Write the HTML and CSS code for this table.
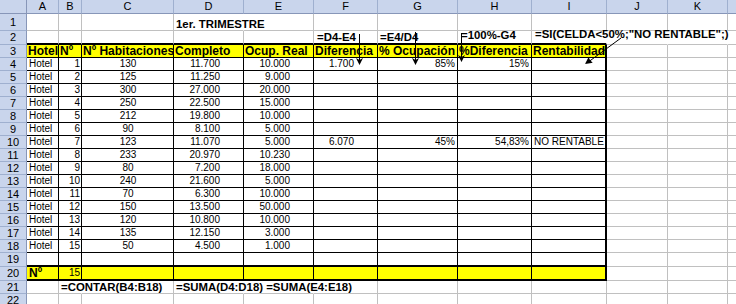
FILE: index.html
```html
<!DOCTYPE html>
<html lang="es">
<head>
<meta charset="utf-8">
<title>1er. TRIMESTRE</title>
<link rel="stylesheet" href="styles.css">
</head>
<body>
<div class="sheet">
  <div class="grid">
    <div class="hdr"><div class="corner"></div><div>A</div><div>B</div><div>C</div><div>D</div><div>E</div><div>F</div><div>G</div><div>H</div><div>I</div><div>J</div><div>K</div><div></div></div>

    <div class="row r1"><div class="rh">1</div><div></div><div></div><div></div><div class="ov f">1er. TRIMESTRE</div><div></div><div></div><div></div><div></div><div></div><div></div><div></div><div></div></div>

    <div class="row top"><div class="rh">2</div><div></div><div></div><div></div><div></div><div></div><div class="f pl3">=D4-E4</div><div class="f">=E4/D4</div><div class="f pl3 up2">=100%-G4</div><div class="ov f pl3 up3">=SI(CELDA&lt;50%;"NO RENTABLE";)</div><div class="nr"></div><div class="nr"></div><div></div></div>

    <div class="row t yl hrow"><div class="rh">3</div><div>Hotel</div><div>Nº</div><div>Nº Habitaciones</div><div>Completo</div><div>Ocup. Real</div><div>Diferencia</div><div>% Ocupación</div><div>%Diferencia</div><div>Rentabilidad</div><div></div><div></div><div></div></div>

    <div class="row t d"><div class="rh">4</div><div>Hotel</div><div>1</div><div>130</div><div>11.700</div><div>10.000</div><div>1.700</div><div>85%</div><div>15%</div><div></div><div></div><div></div><div></div></div>
    <div class="row t d"><div class="rh">5</div><div>Hotel</div><div>2</div><div>125</div><div>11.250</div><div>9.000</div><div></div><div></div><div></div><div></div><div></div><div></div><div></div></div>
    <div class="row t d"><div class="rh">6</div><div>Hotel</div><div>3</div><div>300</div><div>27.000</div><div>20.000</div><div></div><div></div><div></div><div></div><div></div><div></div><div></div></div>
    <div class="row t d"><div class="rh">7</div><div>Hotel</div><div>4</div><div>250</div><div>22.500</div><div>15.000</div><div></div><div></div><div></div><div></div><div></div><div></div><div></div></div>
    <div class="row t d"><div class="rh">8</div><div>Hotel</div><div>5</div><div>212</div><div>19.800</div><div>10.000</div><div></div><div></div><div></div><div></div><div></div><div></div><div></div></div>
    <div class="row t d"><div class="rh">9</div><div>Hotel</div><div>6</div><div>90</div><div>8.100</div><div>5.000</div><div></div><div></div><div></div><div></div><div></div><div></div><div></div></div>
    <div class="row t d"><div class="rh">10</div><div>Hotel</div><div>7</div><div>123</div><div>11.070</div><div>5.000</div><div>6.070</div><div>45%</div><div>54,83%</div><div>NO RENTABLE</div><div></div><div></div><div></div></div>
    <div class="row t d"><div class="rh">11</div><div>Hotel</div><div>8</div><div>233</div><div>20.970</div><div>10.230</div><div></div><div></div><div></div><div></div><div></div><div></div><div></div></div>
    <div class="row t d"><div class="rh">12</div><div>Hotel</div><div>9</div><div>80</div><div>7.200</div><div>18.000</div><div></div><div></div><div></div><div></div><div></div><div></div><div></div></div>
    <div class="row t d"><div class="rh">13</div><div>Hotel</div><div>10</div><div>240</div><div>21.600</div><div>5.000</div><div></div><div></div><div></div><div></div><div></div><div></div><div></div></div>
    <div class="row t d"><div class="rh">14</div><div>Hotel</div><div>11</div><div>70</div><div>6.300</div><div>10.000</div><div></div><div></div><div></div><div></div><div></div><div></div><div></div></div>
    <div class="row t d"><div class="rh">15</div><div>Hotel</div><div>12</div><div>150</div><div>13.500</div><div>50.000</div><div></div><div></div><div></div><div></div><div></div><div></div><div></div></div>
    <div class="row t d"><div class="rh">16</div><div>Hotel</div><div>13</div><div>120</div><div>10.800</div><div>10.000</div><div></div><div></div><div></div><div></div><div></div><div></div><div></div></div>
    <div class="row t d"><div class="rh">17</div><div>Hotel</div><div>14</div><div>135</div><div>12.150</div><div>3.000</div><div></div><div></div><div></div><div></div><div></div><div></div><div></div></div>
    <div class="row t d"><div class="rh">18</div><div>Hotel</div><div>15</div><div>50</div><div>4.500</div><div>1.000</div><div></div><div></div><div></div><div></div><div></div><div></div><div></div></div>

    <div class="row t tk"><div class="rh">19</div><div></div><div></div><div></div><div></div><div></div><div></div><div></div><div></div><div></div><div></div><div></div><div></div></div>
    <div class="row t tk yl d"><div class="rh">20</div><div class="b">Nº</div><div>15</div><div></div><div></div><div></div><div></div><div></div><div></div><div></div><div></div><div></div><div></div></div>

    <div class="row"><div class="rh">21</div><div></div><div class="ov f">=CONTAR(B4:B18)</div><div></div><div class="ov f">=SUMA(D4:D18) =SUMA(E4:E18)</div><div class="nr"></div><div></div><div></div><div></div><div></div><div></div><div></div><div></div></div>
    <div class="row"><div class="rh">22</div><div></div><div></div><div></div><div></div><div></div><div></div><div></div><div></div><div></div><div></div><div></div><div></div></div>
  </div>

  <svg class="arrows" width="736" height="304" viewBox="0 0 736 304">
    <g stroke="#000" stroke-width="1" fill="none">
      <line x1="359.5" y1="34" x2="359.5" y2="60"/>
      <line x1="415.5" y1="32" x2="415.5" y2="60"/>
      <line x1="461.5" y1="33" x2="461.5" y2="57"/>
      <line x1="621" y1="38" x2="589" y2="61.5"/>
    </g>
    <g fill="#000">
      <polygon points="356,58 359.5,60 363,58 359.5,65"/>
      <polygon points="412,58 415.5,60 419,58 415.5,65"/>
      <polygon points="458,55 461.5,57 465,55 461.5,62"/>
      <polygon points="585,64 592.7,62.7 590,60 588.6,57.1"/>
    </g>
  </svg>
</div>
</body>
</html>
```

FILE: styles.css
```css
* { box-sizing: border-box; }

html, body {
  margin: 0;
  padding: 0;
  background: #fff;
  overflow: hidden;
}

body {
  font-family: "Liberation Sans", Arial, sans-serif;
  font-size: 10px;
  color: #000;
}

.sheet {
  position: relative;
  width: 736px;
  height: 304px;
  overflow: hidden;
}

.grid {
  display: grid;
  grid-template-columns: 27px 32px 23px 92px 70px 70px 64px 80px 74px 75px 61px 60px 60px;
  grid-template-rows: 14px 17px 14px 13px repeat(15, 13px) 14px 14px 13px 13px;
  width: 788px;
}

.row, .hdr { display: contents; }

/* column header strip */
.hdr > div {
  background: #c9d5ec;
  border-right: 1px solid #9fb0cf;
  border-bottom: 1px solid #8796b8;
  text-align: center;
  font-size: 11px;
  line-height: 13px;
}
.hdr > .corner { border-right-color: #8796b8; }

/* base cell */
.grid .row > div {
  border-right: 1px solid #c0c0c0;
  border-bottom: 1px solid #c0c0c0;
  padding: 0 1px 0 2px;
  line-height: 12px;
  white-space: nowrap;
  overflow: hidden;
}

/* row header */
.grid .row > .rh {
  background: #c9d5ec;
  border-right: 1px solid #8796b8;
  border-bottom: 1px solid #9fb0cf;
  display: flex;
  align-items: flex-start;
  justify-content: center;
  font-size: 11px;
  line-height: 12px;
  padding: 0;
}
.grid .r1 > .rh { padding-top: 2px; }

/* bordered table A3:I20 */
.grid .t > div:nth-child(n+2):nth-child(-n+10) { border-color: #000; }
.grid .t > div:nth-child(10) { border-right: 2px solid #000; }
.grid .top > div:nth-child(n+2):nth-child(-n+10) { border-bottom: 2px solid #000; }
.grid .tk > div:nth-child(n+2):nth-child(-n+10) { border-bottom: 2px solid #000; }
.grid .yl > div:nth-child(n+2):nth-child(-n+10) { background: #ffff00; }

/* header row 3 */
.grid .hrow > div:nth-child(n+2) {
  font-weight: bold;
  font-size: 12px;
  padding-left: 1px;
}

/* data alignment */
.grid .d > div:nth-child(3) { text-align: right; padding-right: 1px; }
.grid .d > div:nth-child(4) { text-align: center; }
.grid .d > div:nth-child(5),
.grid .d > div:nth-child(6),
.grid .d > div:nth-child(7) { text-align: right; padding-right: 23px; }
.grid .d > div:nth-child(8),
.grid .d > div:nth-child(9) { text-align: right; padding-right: 2px; }

/* text utilities */
.grid .row > .b { font-weight: bold; font-size: 12px; }
.grid .row > .f { font-weight: bold; font-size: 11.4px; overflow: visible; }
.grid .row > .pl3 { padding-left: 3px; }
.grid .row > .up2 { line-height: 8px; }
.grid .row > .up3 { line-height: 6px; }
.grid .r1 > div { padding-top: 4px; }

/* text spilling into neighbouring cells hides the gridline */
.grid .row > .ov { overflow: visible; border-right-color: transparent; }
.grid .row > .nr { border-right-color: transparent; }

.arrows {
  position: absolute;
  left: 0;
  top: 0;
  pointer-events: none;
}
```
